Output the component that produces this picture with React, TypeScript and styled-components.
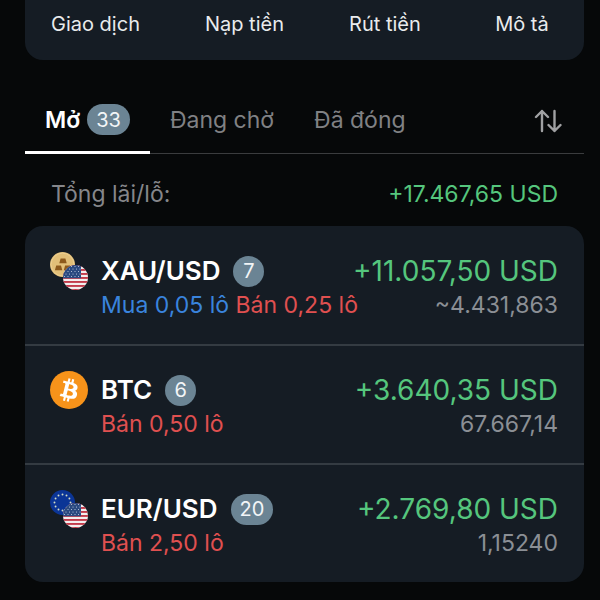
import React from "react";
import styled, { createGlobalStyle } from "styled-components";

const GlobalStyle = createGlobalStyle`
  *, *::before, *::after { box-sizing: border-box; }
  body {
    margin: 0;
    background: #060809;
    color: #fff;
    font-family: Inter, "Liberation Sans", sans-serif;
    -webkit-font-smoothing: antialiased;
  }
  button { font: inherit; color: inherit; background: none; border: 0; padding: 0; cursor: pointer; }
  ul, h2, p { margin: 0; padding: 0; list-style: none; }
`;

const Page = styled.main`
  padding: 0 16px 16px 25px;
`;

const Actions = styled.nav`
  display: flex;
  justify-content: space-between;
  padding: 9px 26px 21px;
  border-radius: 0 0 18px 18px;
  background: #151c24;
`;

const ActionButton = styled.button`
  min-width: 72px;
  font-size: 20px;
  line-height: 30px;
  color: #e9ebed;
  white-space: nowrap;
`;

const TabBar = styled.div`
  display: flex;
  align-items: stretch;
  height: 66px;
  margin-top: 28px;
  border-bottom: 1px solid #3a3c3e;
`;

const Tab = styled.button<{ $active?: boolean }>`
  display: flex;
  align-items: center;
  gap: 7px;
  margin-bottom: -1px;
  padding: 0 20px;
  border-bottom: 3px solid ${(p) => (p.$active ? "#fff" : "transparent")};
  font-size: 23px;
  line-height: 30px;
  font-weight: ${(p) => (p.$active ? 600 : 400)};
  color: ${(p) => (p.$active ? "#fff" : "#808184")};
  white-space: nowrap;
`;

const SortButton = styled.button`
  display: flex;
  align-items: center;
  margin-left: auto;
  padding-right: 22px;
  color: #a0a1a3;
`;

const Badge = styled.span<{ $round?: boolean }>`
  display: inline-flex;
  align-items: center;
  justify-content: center;
  min-width: 31px;
  height: 31px;
  padding: 0 ${(p) => (p.$round ? 0 : 9)}px;
  border-radius: 16px;
  background: #6b8494;
  font-size: 20px;
  line-height: 30px;
  font-weight: 400;
  color: #f2f5f7;
`;

const Total = styled.div`
  display: flex;
  justify-content: space-between;
  padding: 25px 26px 17px;
  font-size: 23px;
  line-height: 30px;
  color: #85868a;
`;

const Gain = styled.span<{ $large?: boolean }>`
  font-size: ${(p) => (p.$large ? 28 : 23)}px;
  color: #55c67d;
  white-space: nowrap;
`;

const Positions = styled.ul`
  border-radius: 18px;
  background: #151c24;
`;

const Position = styled.li`
  display: flex;
  gap: 13px;
  padding: 26px 26px 24px 25px;

  & + & {
    border-top: 2px solid #343b42;
    padding-top: 25px;
  }
`;

const IconBox = styled.span`
  flex: none;
  height: 38px;
  svg { display: block; }
`;

const Details = styled.div`
  flex: 1;
  min-width: 0;
`;

const Line = styled.div`
  display: flex;
  align-items: center;
  justify-content: space-between;
  line-height: 38px;
`;

const SubLine = styled(Line)`
  font-size: 23px;
  line-height: 30px;
  white-space: nowrap;
`;

const Title = styled.div`
  display: flex;
  align-items: center;
  gap: 13px;
`;

const Symbol = styled.h2`
  font-size: 26px;
  line-height: 38px;
  font-weight: 600;
`;

const Lots = styled.span<{ $side: "buy" | "sell" }>`
  color: ${(p) => (p.$side === "buy" ? "#3a84dd" : "#e05050")};
`;

const Price = styled.span`
  color: #8b8f95;
`;

const UsFlag = ({ id }: { id: string }) => (
  <g>
    <clipPath id={id}>
      <circle cx="25.5" cy="25.5" r="12.5" />
    </clipPath>
    <g clipPath={`url(#${id})`}>
      <rect x="13" y="13" width="25" height="25" fill="#f3eeee" />
      {[13, 17, 21, 25, 29, 33, 37].map((y) => (
        <rect key={y} x="13" y={y} width="25" height="1.9" fill="#c23b4b" />
      ))}
      <rect x="13" y="13" width="18" height="13.2" fill="#2b4a80" />
      {[14.5, 17, 19.5, 22, 24.5].map((y, row) =>
        [14.5, 18, 21.5, 25, 28.5].map((x) => (
          <circle key={`${x}-${y}`} cx={x + (row % 2) * 1.5} cy={y} r="0.55" fill="#c3cfe2" />
        ))
      )}
    </g>
  </g>
);

const GoldIcon = () => (
  <svg width="38" height="38" viewBox="0 0 38 38" aria-hidden="true">
    <circle cx="12.5" cy="12.5" r="12.5" fill="#e2bf78" />
    <circle cx="12.5" cy="12.5" r="11.4" fill="none" stroke="#edcf91" strokeWidth="1" />
    <path d="M10.6 6.6h4.8l1.3 4.6H9.3zM6.2 13.6H11l1.3 4.6H4.9zM15.1 13.6h4.8l1.3 4.6h-7.4z" fill="#8d5a1c" />
    <UsFlag id="gold-usd" />
  </svg>
);

const EuroIcon = () => (
  <svg width="38" height="38" viewBox="0 0 38 38" aria-hidden="true">
    <circle cx="12.5" cy="12.5" r="12.5" fill="#0b3596" />
    {Array.from({ length: 12 }, (_, i) => {
      const a = (i * Math.PI) / 6;
      return <circle key={i} cx={12.5 + 8 * Math.sin(a)} cy={12.5 - 8 * Math.cos(a)} r="0.95" fill="#d3dcc4" />;
    })}
    <UsFlag id="euro-usd" />
  </svg>
);

const BitcoinIcon = () => (
  <svg width="38" height="38" viewBox="0 0 32 32" aria-hidden="true">
    <circle cx="16" cy="16" r="16" fill="#f7931a" />
    <path
      fill="#fff"
      d="M23.189 14.02c.314-2.096-1.283-3.223-3.465-3.975l.708-2.84-1.728-.43-.69 2.765c-.454-.114-.92-.22-1.385-.326l.695-2.783L15.596 6l-.708 2.839c-.376-.086-.746-.17-1.104-.26l.002-.009-2.384-.595-.46 1.846s1.283.294 1.256.312c.7.175.826.638.805 1.006l-.806 3.235c.048.012.11.03.18.057l-.183-.045-1.13 4.532c-.086.212-.303.531-.793.41.018.025-1.256-.313-1.256-.313l-.858 1.978 2.25.561c.418.105.828.215 1.231.318l-.715 2.872 1.727.43.708-2.84c.472.127.93.245 1.378.357l-.706 2.828 1.728.43.715-2.866c2.948.558 5.164.333 6.097-2.333.752-2.146-.037-3.385-1.588-4.192 1.13-.26 1.98-1.003 2.207-2.538zm-3.95 5.538c-.533 2.147-4.148.986-5.32.695l.95-3.805c1.172.293 4.929.872 4.37 3.11zm.535-5.569c-.487 1.953-3.495.96-4.47.717l.86-3.45c.975.243 4.118.696 3.61 2.733z"
    />
  </svg>
);

const SortIcon = () => (
  <svg width="28" height="24" viewBox="0 0 28 24" fill="none" stroke="currentColor" strokeWidth="2.4" strokeLinecap="round" strokeLinejoin="round" aria-hidden="true">
    <path d="M8 22V2M2 8l6-6 6 6M20.5 2v20M14.5 16l6 6 6-6" />
  </svg>
);

interface PositionData {
  symbol: string;
  icon: React.ReactNode;
  count: number;
  gain: string;
  buy?: string;
  sell: string;
  price: string;
}

const actions = ["Giao dịch", "Nạp tiền", "Rút tiền", "Mô tả"];

const positions: PositionData[] = [
  { symbol: "XAU/USD", icon: <GoldIcon />, count: 7, gain: "+11.057,50 USD", buy: "Mua 0,05 lô", sell: "Bán 0,25 lô", price: "~4.431,863" },
  { symbol: "BTC", icon: <BitcoinIcon />, count: 6, gain: "+3.640,35 USD", sell: "Bán 0,50 lô", price: "67.667,14" },
  { symbol: "EUR/USD", icon: <EuroIcon />, count: 20, gain: "+2.769,80 USD", sell: "Bán 2,50 lô", price: "1,15240" },
];

export default function App() {
  return (
    <>
      <GlobalStyle />
      <Page>
        <Actions>
          {actions.map((label) => (
            <ActionButton key={label}>{label}</ActionButton>
          ))}
        </Actions>
        <TabBar>
          <Tab $active>
            Mở <Badge>33</Badge>
          </Tab>
          <Tab>Đang chờ</Tab>
          <Tab>Đã đóng</Tab>
          <SortButton aria-label="Sắp xếp">
            <SortIcon />
          </SortButton>
        </TabBar>
        <Total>
          <span>Tổng lãi/lỗ:</span>
          <Gain>+17.467,65 USD</Gain>
        </Total>
        <Positions>
          {positions.map((p) => (
            <Position key={p.symbol}>
              <IconBox>{p.icon}</IconBox>
              <Details>
                <Line>
                  <Title>
                    <Symbol>{p.symbol}</Symbol>
                    <Badge $round={p.count < 10}>{p.count}</Badge>
                  </Title>
                  <Gain $large>{p.gain}</Gain>
                </Line>
                <SubLine>
                  <span>
                    {p.buy && (
                      <>
                        <Lots $side="buy">{p.buy}</Lots>{" "}
                      </>
                    )}
                    <Lots $side="sell">{p.sell}</Lots>
                  </span>
                  <Price>{p.price}</Price>
                </SubLine>
              </Details>
            </Position>
          ))}
        </Positions>
      </Page>
    </>
  );
}
